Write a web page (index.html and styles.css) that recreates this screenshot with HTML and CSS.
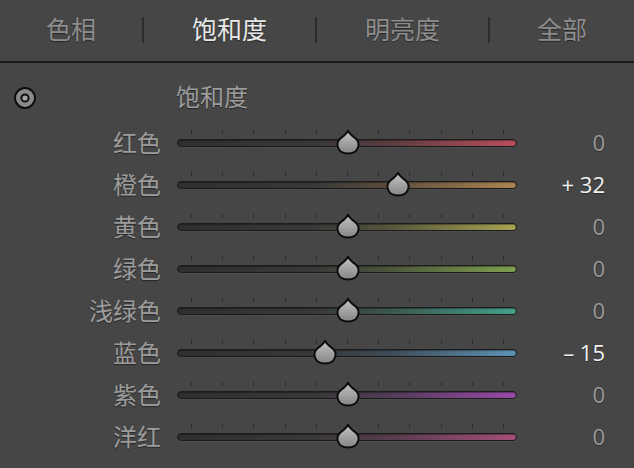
FILE: index.html
```html
<!DOCTYPE html>
<html lang="zh">
<head>
<meta charset="utf-8">
<title>HSL 饱和度</title>
<link rel="stylesheet" href="styles.css">
</head>
<body>
<svg class="defs" width="0" height="0" aria-hidden="true">
  <defs>
    <linearGradient id="thumbFill" x1="0" y1="0" x2="0" y2="1">
      <stop offset="0" stop-color="#c4c4c4"/>
      <stop offset="1" stop-color="#858585"/>
    </linearGradient>
    <symbol id="thumb" viewBox="0 0 24 24">
      <path d="M12 1.6 C13.4 4.5 15.7 6.2 18.4 8.2 C21.5 10.6 22.3 14 21.2 17.1 C19.8 20.9 16.3 22.6 12 22.6 C7.7 22.6 4.2 20.9 2.8 17.1 C1.7 14 2.5 10.6 5.6 8.2 C8.3 6.2 10.6 4.5 12 1.6 Z" fill="url(#thumbFill)" stroke="#0c0c0c" stroke-width="1.8" stroke-linejoin="round"/>
    </symbol>
  </defs>
</svg>
<div class="panel">
  <nav class="tabs">
    <div class="tab">色相</div>
    <span class="sep"></span>
    <div class="tab active">饱和度</div>
    <span class="sep"></span>
    <div class="tab">明亮度</div>
    <span class="sep"></span>
    <div class="tab">全部</div>
  </nav>
  <section class="adjust">
    <div class="head">
      <svg class="target" width="24" height="24" viewBox="0 0 24 24">
        <circle cx="12" cy="12" r="10" fill="#8a8a8a" stroke="#0e0e0e" stroke-width="2"/>
        <circle cx="12" cy="12" r="3.6" fill="#a5a5a5" stroke="#0e0e0e" stroke-width="2"/>
      </svg>
      <span class="title">饱和度</span>
    </div>

    <div class="row c-red">
      <span class="label">红色</span>
      <div class="slider">
        <div class="ticks"><i></i><i></i><i></i><i></i><i></i><i></i><i></i><i></i><i></i><i></i><i></i></div>
        <div class="track"></div>
        <svg class="thumb" style="left:157px"><use href="#thumb"/></svg>
      </div>
      <span class="value">0</span>
    </div>

    <div class="row c-orange">
      <span class="label">橙色</span>
      <div class="slider">
        <div class="ticks"><i></i><i></i><i></i><i></i><i></i><i></i><i></i><i></i><i></i><i></i><i></i></div>
        <div class="track"></div>
        <svg class="thumb" style="left:207px"><use href="#thumb"/></svg>
      </div>
      <span class="value changed">+ 32</span>
    </div>

    <div class="row c-yellow">
      <span class="label">黄色</span>
      <div class="slider">
        <div class="ticks"><i></i><i></i><i></i><i></i><i></i><i></i><i></i><i></i><i></i><i></i><i></i></div>
        <div class="track"></div>
        <svg class="thumb" style="left:157px"><use href="#thumb"/></svg>
      </div>
      <span class="value">0</span>
    </div>

    <div class="row c-green">
      <span class="label">绿色</span>
      <div class="slider">
        <div class="ticks"><i></i><i></i><i></i><i></i><i></i><i></i><i></i><i></i><i></i><i></i><i></i></div>
        <div class="track"></div>
        <svg class="thumb" style="left:157px"><use href="#thumb"/></svg>
      </div>
      <span class="value">0</span>
    </div>

    <div class="row c-aqua">
      <span class="label">浅绿色</span>
      <div class="slider">
        <div class="ticks"><i></i><i></i><i></i><i></i><i></i><i></i><i></i><i></i><i></i><i></i><i></i></div>
        <div class="track"></div>
        <svg class="thumb" style="left:157px"><use href="#thumb"/></svg>
      </div>
      <span class="value">0</span>
    </div>

    <div class="row c-blue">
      <span class="label">蓝色</span>
      <div class="slider">
        <div class="ticks"><i></i><i></i><i></i><i></i><i></i><i></i><i></i><i></i><i></i><i></i><i></i></div>
        <div class="track"></div>
        <svg class="thumb" style="left:133.6px"><use href="#thumb"/></svg>
      </div>
      <span class="value changed">– 15</span>
    </div>

    <div class="row c-purple">
      <span class="label">紫色</span>
      <div class="slider">
        <div class="ticks"><i></i><i></i><i></i><i></i><i></i><i></i><i></i><i></i><i></i><i></i><i></i></div>
        <div class="track"></div>
        <svg class="thumb" style="left:157px"><use href="#thumb"/></svg>
      </div>
      <span class="value">0</span>
    </div>

    <div class="row c-magenta">
      <span class="label">洋红</span>
      <div class="slider">
        <div class="ticks"><i></i><i></i><i></i><i></i><i></i><i></i><i></i><i></i><i></i><i></i><i></i></div>
        <div class="track"></div>
        <svg class="thumb" style="left:157px"><use href="#thumb"/></svg>
      </div>
      <span class="value">0</span>
    </div>
  </section>
</div>
</body>
</html>
```

FILE: styles.css
```css
html, body {
  margin: 0;
  padding: 0;
  background: #464646;
}

body {
  width: 634px;
  height: 468px;
  overflow: hidden;
  font-family: "Noto Sans CJK SC", "Noto Sans", sans-serif;
}

.defs {
  display: block;
  width: 0;
  height: 0;
  overflow: hidden;
}

.panel {
  background: #464646;
}

/* ---------- tabs ---------- */
.tabs {
  display: grid;
  grid-template-columns: 142px 2px 171px 2px 171px 2px 1fr;
  align-items: center;
  height: 56px;
  padding-bottom: 5px;
  border-bottom: 2px solid #1a1a1a;
}

.tab {
  text-align: center;
  font-size: 25px;
  line-height: 30px;
  color: #8d8d8d;
  text-shadow: 0 1px 1px rgba(0, 0, 0, 0.45);
}

.tab.active {
  color: #e8e8e8;
}

.sep {
  display: block;
  height: 26px;
  margin-top: 4px;
  background: #2c2c2c;
}

/* ---------- adjust list ---------- */
.adjust {
  padding-top: 12px;
}

.head {
  display: grid;
  grid-template-columns: 176px 1fr;
  align-items: center;
  height: 42px;
  margin-bottom: 4px;
}

.target {
  display: block;
  margin-left: 13px;
  margin-top: 4px;
}

.title {
  font-size: 24px;
  line-height: 42px;
  color: #9c9c9c;
  text-shadow: 0 1px 1px rgba(0, 0, 0, 0.45);
}

.row {
  display: grid;
  grid-template-columns: 161px 340px 1fr;
  column-gap: 16px;
  height: 42px;
  align-items: start;
}

.label {
  text-align: right;
  font-size: 24px;
  line-height: 41px;
  color: #9c9c9c;
  text-shadow: 0 1px 1px rgba(0, 0, 0, 0.45);
  white-space: nowrap;
}

.slider {
  position: relative;
  display: flex;
  flex-direction: column;
  padding-top: 9px;
  gap: 5px;
}

.ticks {
  display: flex;
  justify-content: space-between;
  height: 4px;
  margin: 0 13px 0 14px;
}

.ticks i {
  display: block;
  width: 1px;
  height: 4px;
  background: #2e2e2e;
}

.track {
  height: 6px;
  border: 1px solid #1c1c1c;
  border-radius: 5px;
  box-shadow: inset 0 1px 1px rgba(0, 0, 0, 0.35), 0 1px 0 rgba(255, 255, 255, 0.03);
  background: linear-gradient(90deg, #2f2f2f 0%, #383838 40%, var(--mid) 62%, var(--end) 100%);
}

.thumb {
  position: absolute;
  top: 8px;
  width: 28px;
  height: 26px;
}

.value {
  text-align: right;
  padding-right: 29px;
  font-family: "Open Sans", "Noto Sans", sans-serif;
  font-size: 22px;
  line-height: 42px;
  color: #9a9a9a;
  text-shadow: 0 1px 1px rgba(0, 0, 0, 0.4);
  white-space: pre;
}

.value.changed {
  color: #f2f2f2;
}

/* ---------- track colours ---------- */
.c-red     { --mid: #5a3c40; --end: #b84f5c; }
.c-orange  { --mid: #5a4c3c; --end: #ad8552; }
.c-yellow  { --mid: #55553c; --end: #a8a452; }
.c-green   { --mid: #4b553c; --end: #7fa04f; }
.c-aqua    { --mid: #3b5550; --end: #43a088; }
.c-blue    { --mid: #3d4a55; --end: #5d93b5; }
.c-purple  { --mid: #503c55; --end: #9a4aa8; }
.c-magenta { --mid: #553c4c; --end: #a64f7c; }
```
